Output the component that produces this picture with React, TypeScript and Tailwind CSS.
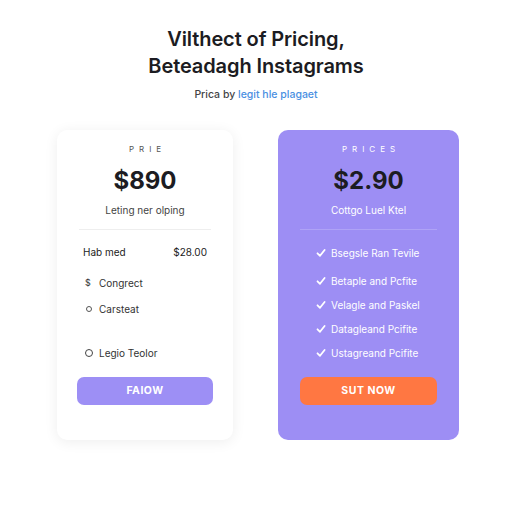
import React from "react";

const Check = () => (
  <svg width="10" height="10" viewBox="0 0 10 10" fill="none" stroke="white" strokeWidth="1.8" strokeLinecap="round" strokeLinejoin="round">
    <path d="M1.5 5.3 L4 7.8 L8.6 2" />
  </svg>
);

export default function App() {
  const feats = [
    "Bsegsle Ran Tevile",
    "Betaple and Pcfite",
    "Velagle and Paskel",
    "Datagleand Pcifite",
    "Ustagreand Pcifite",
  ];
  return (
    <div className="w-[512px] h-[512px] bg-white flex flex-col items-center" style={{ fontFamily: "Inter, 'Liberation Sans', sans-serif" }}>
      <div className="mt-[26px] flex flex-col items-center text-[#1c1c22]">
        <div className="text-[20px] font-semibold leading-[27px] tracking-[-0.1px]">Vilthect of Pricing,</div>
        <div className="text-[20px] font-semibold leading-[27px] tracking-[-0.1px]">Beteadagh Instagrams</div>
        <div className="text-[10.5px] mt-[8px] font-medium text-[#444] leading-[14px]">
          Prica by <span className="text-[#4a90e2]">legit hle plagaet</span>
        </div>
      </div>
      <div className="flex gap-[45px] mt-[28px] ml-[4px]">
        <div className="w-[176px] h-[310px] rounded-[10px] bg-white shadow-[0_2px_14px_rgba(0,0,0,0.07)] flex flex-col px-[20px]">
          <div className="text-center text-[8px] tracking-[5px] text-[#555] mt-[14px] leading-[10px] pl-[5px]">PRIE</div>
          <div className="text-center text-[24px] font-bold text-[#1c1c22] mt-[11px] leading-[32px]">$890</div>
          <div className="text-center text-[10px] text-[#444] mt-[6px] leading-[14px]">Leting ner olping</div>
          <div className="h-px bg-[#eee] mt-[12px] mx-[2px]" />
          <div className="flex justify-between text-[10px] text-[#222] mt-[15px] px-[6px] leading-[14px]">
            <span>Hab med</span>
            <span>$28.00</span>
          </div>
          <div className="flex items-center gap-[6px] text-[10px] text-[#333] mt-[17px] px-[8px] leading-[14px]">
            <span className="text-[9px] w-[8px]">$</span>
            <span>Congrect</span>
          </div>
          <div className="flex items-center gap-[6px] text-[10px] text-[#333] mt-[12px] px-[8px] leading-[14px]">
            <span className="w-[6px] h-[6px] rounded-full border border-[#555] ml-[1px]" />
            <span className="ml-[1px]">Carsteat</span>
          </div>
          <div className="flex items-center gap-[6px] text-[10px] text-[#333] mt-[30px] px-[8px] leading-[14px]">
            <span className="w-[8px] h-[8px] rounded-full border border-[#444]" />
            <span>Legio Teolor</span>
          </div>
          <div className="mt-[17px] h-[28px] rounded-[7px] bg-[#9d8ff5] flex items-center justify-center text-white text-[10.5px] font-bold tracking-[0.5px]">FAIOW</div>
        </div>
        <div className="w-[181px] h-[310px] rounded-[10px] bg-[#9d8ef4] flex flex-col px-[22px]">
          <div className="text-center text-[8px] tracking-[5px] text-white mt-[14px] leading-[10px] pl-[5px]">PRICES</div>
          <div className="text-center text-[24px] font-bold text-[#1c1c22] mt-[11px] leading-[32px]">$2.90</div>
          <div className="text-center text-[10px] text-white mt-[6px] leading-[14px]">Cottgo Luel Ktel</div>
          <div className="h-px bg-[#afa3f6] mt-[12px]" />
          <div className="flex flex-col gap-[10px] mt-[16px] px-[16px]">
            {feats.map((f, i) => (
              <div key={i} className={`flex items-center gap-[5px] text-[10px] text-white leading-[14px] ${i === 0 ? "mb-[4px]" : ""}`}>
                <Check />
                <span>{f}</span>
              </div>
            ))}
          </div>
          <div className="mt-[17px] h-[28px] rounded-[7px] bg-[#ff7742] flex items-center justify-center text-white text-[10.5px] font-bold tracking-[0.5px]">SUT NOW</div>
        </div>
      </div>
    </div>
  );
}
